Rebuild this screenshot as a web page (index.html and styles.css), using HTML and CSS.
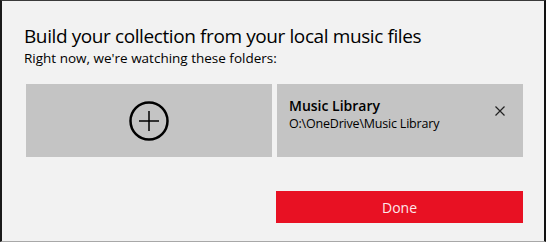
FILE: index.html
```html
<!DOCTYPE html>
<html lang="en">
  <head>
    <meta charset="UTF-8" />
    <title>Music folders</title>
    <link rel="stylesheet" href="styles.css">
  </head>
  <body>
    <div class="dialog">
      <h1 class="title">Build your collection from your local music files</h1>
      <p class="subtitle">Right now, we're watching these folders:</p>

      <div class="folders">
        <button class="tile add-tile" aria-label="Add folder">
          <svg width="42" height="42" viewBox="0 0 42 42">
            <circle cx="21" cy="21" r="18.5" fill="none" stroke="#000" stroke-width="2.5" />
            <path d="M11 21h20M21 11v20" stroke="#000" stroke-width="1.5" />
          </svg>
        </button>
        <div class="tile folder-tile">
          <div class="folder-info">
            <div class="folder-name">Music Library</div>
            <div class="folder-path">O:\OneDrive\Music Library</div>
          </div>
          <svg class="remove" width="10" height="10" viewBox="0 0 10 10">
            <path d="M0.5 0.5l9 9M9.5 0.5l-9 9" stroke="#222" stroke-width="1.2" />
          </svg>
        </div>
      </div>

      <div class="actions">
        <button class="done">Done</button>
      </div>
    </div>
  </body>
</html>
```

FILE: styles.css
```css
* {
  margin: 0;
  padding: 0;
  box-sizing: border-box;
}

body {
  background: #ffffff;
  font-family: "Open Sans", sans-serif;
  color: #000000;
}

.dialog {
  width: 546px;
  height: 242px;
  background: #f2f2f2;
  border-top: 1px solid #3a3a3a;
  border-left: 2px solid #1a1a1a;
  border-right: 2px solid #111111;
  border-bottom: 1px solid #a8a8a8;
  padding: 22px 0 0 22px;
}

.title {
  font-size: 19px;
  font-weight: 400;
  line-height: 26px;
  letter-spacing: -0.4px;
}

.subtitle {
  font-size: 13.5px;
  line-height: 18px;
  letter-spacing: 0;
}

.folders {
  display: flex;
  gap: 5px;
  margin: 17px 0 0 2px;
}

.tile {
  width: 246px;
  height: 73px;
  background: #c4c4c4;
  border: none;
}

.add-tile {
  display: flex;
  align-items: center;
  justify-content: center;
  padding-top: 1px;
}

.folder-tile {
  display: flex;
  justify-content: space-between;
  padding: 13px 18px 0 12px;
}

.folder-name {
  font-size: 14px;
  font-weight: 600;
  line-height: 18px;
}

.folder-path {
  font-size: 12.5px;
  line-height: 18px;
  letter-spacing: -0.2px;
}

.remove {
  margin-top: 9px;
}

.actions {
  display: flex;
  justify-content: flex-end;
  padding-right: 21px;
  margin-top: 34px;
}

.done {
  width: 247px;
  height: 32px;
  background: #e81123;
  color: #fde8ea;
  border: none;
  font-family: "Open Sans", sans-serif;
  font-size: 14px;
}
```
